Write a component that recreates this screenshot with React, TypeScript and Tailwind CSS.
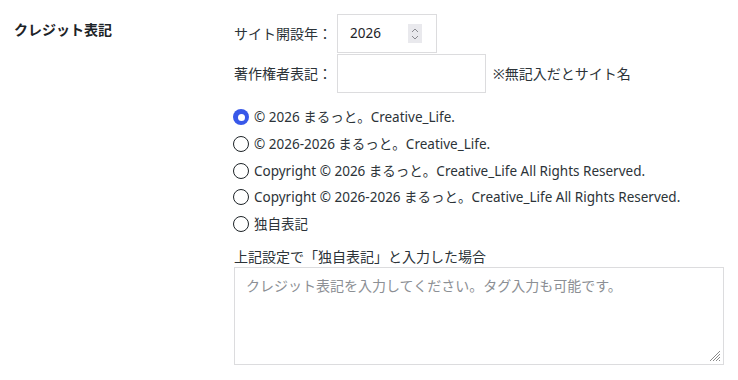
import React from 'react'

const options = [
  '© 2026 まるっと。Creative_Life.',
  '© 2026-2026 まるっと。Creative_Life.',
  'Copyright © 2026 まるっと。Creative_Life All Rights Reserved.',
  'Copyright © 2026-2026 まるっと。Creative_Life All Rights Reserved.',
  '独自表記',
]

function Spinner() {
  return (
    <div className="flex h-[19px] w-[14px] flex-col items-center justify-center bg-[#e9e9ed]">
      <svg width="8" height="14" viewBox="0 0 8 14" fill="none" stroke="#8a8a90" strokeWidth="1">
        <path d="M1 5 L4 2 L7 5" />
        <path d="M1 9 L4 12 L7 9" />
      </svg>
    </div>
  )
}

export default function App() {
  const [selected, setSelected] = React.useState(0)
  return (
    <div
      className="flex h-[380px] w-[738px] bg-white text-[13.5px] text-[#2c3338]"
      style={{ fontFamily: '"Noto Sans", "Noto Sans CJK JP", sans-serif' }}
    >
      <div className="w-[234px] shrink-0 pl-[14px] pt-[19px]">
        <h2 className="text-[14px] font-bold leading-[22px] text-[#1d2327]">クレジット表記</h2>
      </div>
      <div className="flex flex-1 flex-col pt-[14px] pr-[15px]">
        <div className="flex items-center">
          <span className="w-[103px] text-[14px]">サイト開設年：</span>
          <div className="flex h-[39px] w-[100px] items-center justify-between border border-[#dcdcde] pl-[12px] pr-[14px] text-[#1d2327]">
            <span>2026</span>
            <Spinner />
          </div>
        </div>
        <div className="mt-px flex items-center">
          <span className="w-[103px] text-[14px]">著作権者表記：</span>
          <div className="h-[39px] w-[149px] border border-[#dcdcde]" />
          <span className="ml-[7px] text-[14px]">※無記入だとサイト名</span>
        </div>
        <div className="mt-[11px] flex flex-col">
          {options.map((label, i) => (
            <label
              key={label}
              className="-ml-px flex h-[26.7px] cursor-pointer items-center gap-[5px]"
              onClick={() => setSelected(i)}
            >
              {selected === i ? (
                <span className="flex h-[16px] w-[16px] items-center justify-center rounded-full bg-[#3858e9]">
                  <span className="h-[7px] w-[7px] rounded-full bg-white" />
                </span>
              ) : (
                <span className="h-[16px] w-[16px] rounded-full border border-[#1d2327]" />
              )}
              <span>{label}</span>
            </label>
          ))}
        </div>
        <div className="mt-[10px] text-[14px] leading-[20px]">上記設定で「独自表記」と入力した場合</div>
        <div className="relative h-[98px] w-[490px] border border-[#dcdcde] px-[11px] pt-[7px] text-[14px] text-[#8c8f94]">
          クレジット表記を入力してください。タグ入力も可能です。
          <svg className="absolute bottom-[2px] right-[2px]" width="13" height="13" viewBox="0 0 13 13" stroke="#8a8a8a" strokeWidth="1">
            <path d="M12 2 L2 12" />
            <path d="M12 5 L5 12" />
            <path d="M12 8 L8 12" />
            <path d="M12 11 L11 12" />
          </svg>
        </div>
      </div>
    </div>
  )
}
